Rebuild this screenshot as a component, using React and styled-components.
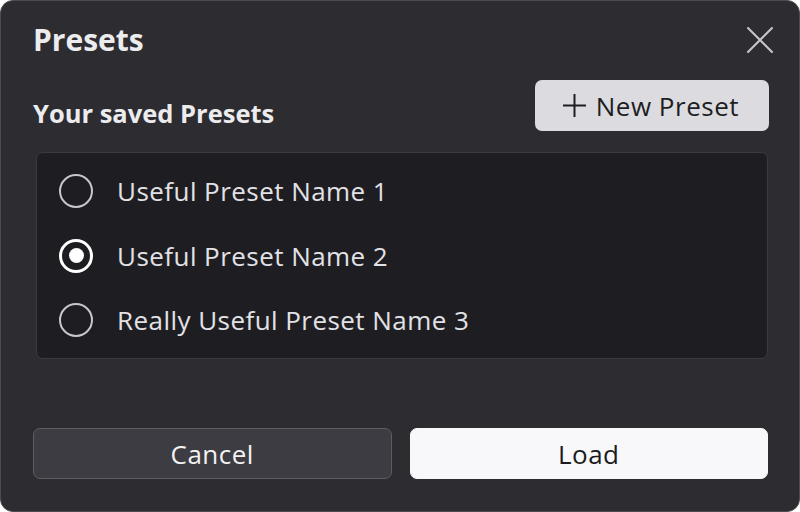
import styled, { createGlobalStyle } from "styled-components"

const Global = createGlobalStyle`
  html, body {
    margin: 0;
    padding: 0;
    background: #ffffff;
  }
  * {
    box-sizing: border-box;
  }
`;

const Dialog = styled.div`
  width: 800px;
  height: 512px;
  background: #2c2c31;
  border: 1px solid #4b4b51;
  border-radius: 13px;
  padding: 18px 31px 32px 32px;
  display: flex;
  flex-direction: column;
  font-family: "Open Sans", "Noto Sans", sans-serif;
  color: #ececef;
`;

const Header = styled.div`
  display: flex;
  justify-content: space-between;
  align-items: center;
  height: 42px;
`;

const Title = styled.h1`
  margin: 0;
  font-size: 30px;
  line-height: 42px;
  font-weight: 700;
  color: #ececef;
`;

const CloseButton = styled.button`
  background: none;
  border: none;
  padding: 0;
  margin-right: -8px;
  width: 32px;
  height: 32px;
  display: flex;
  align-items: center;
  justify-content: center;
  cursor: pointer;
`;

const SectionRow = styled.div`
  display: flex;
  justify-content: space-between;
  align-items: flex-end;
  margin-top: 19px;
`;

const SectionTitle = styled.h2`
  margin: 0 0 1px;
  font-size: 25.5px;
  font-weight: 700;
  color: #ececef;
`;

const NewButton = styled.button`
  display: flex;
  align-items: center;
  gap: 10px;
  height: 51px;
  padding: 0 30px 0 28px;
  margin-right: -1px;
  background: #dcdce0;
  color: #1e1e22;
  border: none;
  border-radius: 7px;
  font-family: inherit;
  font-size: 26px;
  letter-spacing: 0.5px;
  cursor: pointer;
`;

const List = styled.div`
  margin: 21px 0 0 3px;
  height: 207px;
  padding: 6px 0;
  background: #1e1e22;
  border: 1px solid #3a3a40;
  border-radius: 7px;
`;

const Row = styled.label`
  display: flex;
  align-items: center;
  gap: 24px;
  height: 64.5px;
  padding-left: 22px;
  font-size: 26px;
  letter-spacing: 0.45px;
  color: #e2e2e6;
  cursor: pointer;
`;

const Radio = styled.span`
  width: 34px;
  height: 34px;
  border-radius: 50%;
  border: ${(p) => (p.$checked ? "3px solid #ffffff" : "2px solid #c8c8cc")};
  display: flex;
  align-items: center;
  justify-content: center;
  flex-shrink: 0;

  &::after {
    content: "";
    display: ${(p) => (p.$checked ? "block" : "none")};
    width: 15px;
    height: 15px;
    border-radius: 50%;
    background: #ffffff;
  }
`;

const Footer = styled.div`
  margin-top: auto;
  display: grid;
  grid-template-columns: 1fr 1fr;
  gap: 18px;
`;

const FooterButton = styled.button`
  height: 51px;
  border-radius: 7px;
  font-family: inherit;
  font-size: 26px;
  letter-spacing: 0.5px;
  cursor: pointer;
  background: ${(p) => (p.$primary ? "#f8f8fa" : "#3c3c42")};
  color: ${(p) => (p.$primary ? "#1c1c20" : "#f2f2f4")};
  border: 1px solid ${(p) => (p.$primary ? "#f8f8fa" : "#5c5c62")};
`;

const presets = [
  "Useful Preset Name 1",
  "Useful Preset Name 2",
  "Really Useful Preset Name 3",
];

const App = () => {
  const selected = 1;
  return (
    <>
      <Global />
      <Dialog>
        <Header>
          <Title>Presets</Title>
          <CloseButton aria-label="Close">
            <svg width="26" height="26" viewBox="0 0 26 26">
              <path d="M1 1 L25 25 M25 1 L1 25" stroke="#c8c8cc" strokeWidth="2" strokeLinecap="round" />
            </svg>
          </CloseButton>
        </Header>
        <SectionRow>
          <SectionTitle>Your saved Presets</SectionTitle>
          <NewButton>
            <svg width="23" height="23" viewBox="0 0 23 23">
              <path d="M11.5 0 V23 M0 11.5 H23" stroke="#1e1e22" strokeWidth="2" />
            </svg>
            New Preset
          </NewButton>
        </SectionRow>
        <List>
          {presets.map((name, i) => (
            <Row key={name}>
              <Radio $checked={i === selected} />
              {name}
            </Row>
          ))}
        </List>
        <Footer>
          <FooterButton>Cancel</FooterButton>
          <FooterButton $primary>Load</FooterButton>
        </Footer>
      </Dialog>
    </>
  )
}

export default App
